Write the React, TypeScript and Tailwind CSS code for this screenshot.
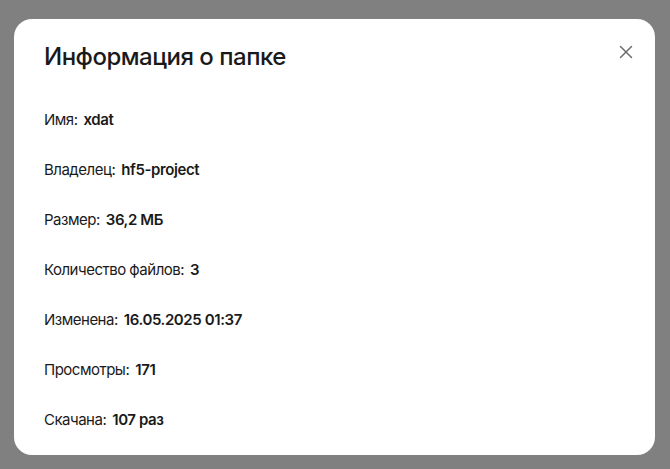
import { X } from "lucide-react";

const rows: [string, string][] = [
  ["Имя", "xdat"],
  ["Владелец", "hf5-project"],
  ["Размер", "36,2 МБ"],
  ["Количество файлов", "3"],
  ["Изменена", "16.05.2025 01:37"],
  ["Просмотры", "171"],
  ["Скачана", "107 раз"],
];

export default function App() {
  return (
    <div
      className="h-[469px] w-[670px] bg-[#808080] pt-[19px] pl-[14px]"
      style={{ fontFamily: "Inter, 'Noto Sans', sans-serif" }}
    >
      <div className="relative h-[436px] w-[641px] rounded-[18px] bg-white px-[30px] pt-[22px]">
        <h2 className="text-[24px] leading-[32px] font-medium text-[#1a1a1a] tracking-[-0.5px]">
          Информация о папке
        </h2>
        <button
          type="button"
          className="absolute right-[17px] top-[21px] flex h-6 w-6 items-center justify-center text-[#6b6b6b]"
        >
          <X size={22} strokeWidth={1.6} />
        </button>
        <div className="mt-[37px] flex flex-col gap-[30px]">
          {rows.map(([label, value]) => (
            <div key={label} className="flex text-[15px] leading-[20px] text-[#1a1a1a]">
              <span className="tracking-[-0.5px]">{label}:</span>
              <span className="ml-[6px] font-semibold tracking-[-0.4px]">{value}</span>
            </div>
          ))}
        </div>
      </div>
    </div>
  );
}
